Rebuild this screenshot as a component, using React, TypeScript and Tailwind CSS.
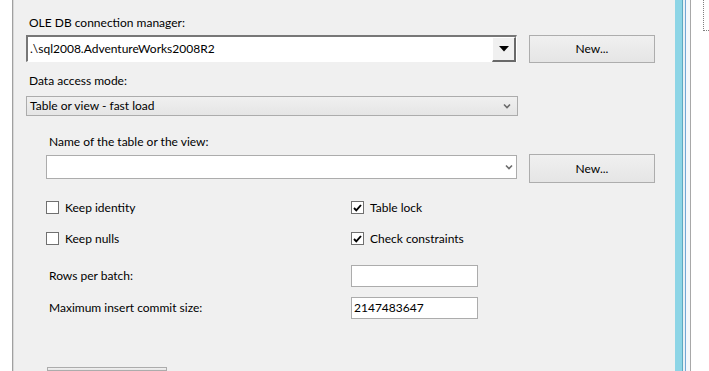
import React from "react";

const Chevron = () => (
  <svg width="8" height="6" viewBox="0 0 8 6" className="shrink-0">
    <path d="M1 1.5 L4 4.5 L7 1.5" fill="none" stroke="#6b6b6b" strokeWidth="1.6" />
  </svg>
);

const NewButton = ({ h }: { h: string }) => (
  <button className={`ml-[12px] w-[126px] ${h} border border-[#adadad] bg-gradient-to-b from-[#f0f0f0] to-[#e5e5e5] text-[12px] text-black flex items-center justify-center`}>
    New...
  </button>
);

const CheckBox = ({ checked, label }: { checked?: boolean; label: string }) => (
  <div className="flex items-center h-[13px]">
    <div className="w-[13px] h-[13px] border border-[#707070] bg-white flex items-center justify-center shrink-0">
      {checked && (
        <svg width="9" height="8" viewBox="0 0 9 8">
          <path d="M1 4 L3.3 6.4 L8 1" fill="none" stroke="#000" strokeWidth="1.9" />
        </svg>
      )}
    </div>
    <span className="ml-[6px] leading-[13px]">{label}</span>
  </div>
);

export default function App() {
  return (
    <div
      className="flex h-[371px] w-[709px] overflow-hidden bg-white text-[12px] text-black"
      style={{ fontFamily: 'Lato, "Segoe UI", sans-serif' }}
    >
      <div className="w-[12px] shrink-0" />
      <div className="w-px shrink-0 bg-[#a0a0a0]" />
      <div className="w-px shrink-0 bg-[#d8d8d8]" />

      {/* main panel */}
      <div className="w-[661px] shrink-0 bg-[#f0f0f0] flex flex-col pt-[15px]">
        <div className="ml-[15px] h-[16px] leading-[16px]">OLE DB connection manager:</div>

        <div className="mt-[4px] flex h-[28px] ml-[12px]">
          <div className="flex w-[491px] h-[27px] border-t-2 border-l-2 border-t-[#777] border-l-[#777] border-r border-b border-r-white border-b-white">
            <div className="flex-1 bg-white pl-[2px] leading-[23px]">.\sql2008.AdventureWorks2008R2</div>
            <div className="w-[24px] h-[25px] bg-[#f0f0f0] border-t border-l border-t-white border-l-white border-r-2 border-b-2 border-r-[#696969] border-b-[#696969] flex items-center justify-center">
              <svg width="10" height="6" viewBox="0 0 10 6">
                <path d="M0 0 H10 L5 5.5 Z" fill="#000" />
              </svg>
            </div>
          </div>
          <NewButton h="h-[28px]" />
        </div>

        <div className="mt-[10px] ml-[15px] h-[16px] leading-[16px]">Data access mode:</div>

        <div className="mt-[7px] ml-[12px] w-[492px] h-[22px] border border-[#acacac] bg-gradient-to-b from-[#f0f0f0] to-[#e5e5e5] flex items-center pl-[3px] pr-[6px]">
          <span className="flex-1">Table or view - fast load</span>
          <Chevron />
        </div>

        <div className="mt-[18px] ml-[35px] h-[16px] leading-[16px]">Name of the table or the view:</div>

        <div className="mt-[4px] flex h-[29px] ml-[32px]">
          <div className="mt-px w-[471px] h-[24px] border border-[#acacac] bg-white flex items-center justify-end pr-[3px]">
            <Chevron />
          </div>
          <NewButton h="h-[29px]" />
        </div>

        <div className="mt-[18px] ml-[32px] grid grid-cols-[305px_1fr] gap-y-[18px]">
          <CheckBox label="Keep identity" />
          <CheckBox checked label="Table lock" />
          <CheckBox label="Keep nulls" />
          <CheckBox checked label="Check constraints" />
        </div>

        <div className="mt-[20px] ml-[35px] grid grid-cols-[302px_127px] gap-y-[10px] items-center">
          <span>Rows per batch:</span>
          <div className="h-[22px] border border-[#acacac] bg-white" />
          <span>Maximum insert commit size:</span>
          <div className="h-[22px] border border-[#acacac] bg-white pl-[2px] leading-[20px]">2147483647</div>
        </div>

        <div className="mt-[48px] ml-[33px] w-[120px] h-[22px] border border-[#acacac] bg-gradient-to-b from-[#f0f0f0] to-[#e5e5e5]" />
      </div>

      {/* right window edge */}
      <div className="w-[7px] shrink-0 bg-[#8dd5e6]" />
      <div className="w-px shrink-0 bg-[#5fa9c0]" />
      <div className="w-[2px] shrink-0 bg-[#e8f1f5]" />
      <div className="w-px shrink-0 bg-[#74a7d6]" />
      <div className="w-[4px] shrink-0 bg-[#f5f8fb]" />
      <div className="w-px shrink-0 bg-[#a8a8a8]" />
      <div className="flex-1 bg-white">
        <div className="ml-[12px] w-[6px] h-[31px] border-l border-b border-dotted border-[#808080]" />
      </div>
    </div>
  );
}
